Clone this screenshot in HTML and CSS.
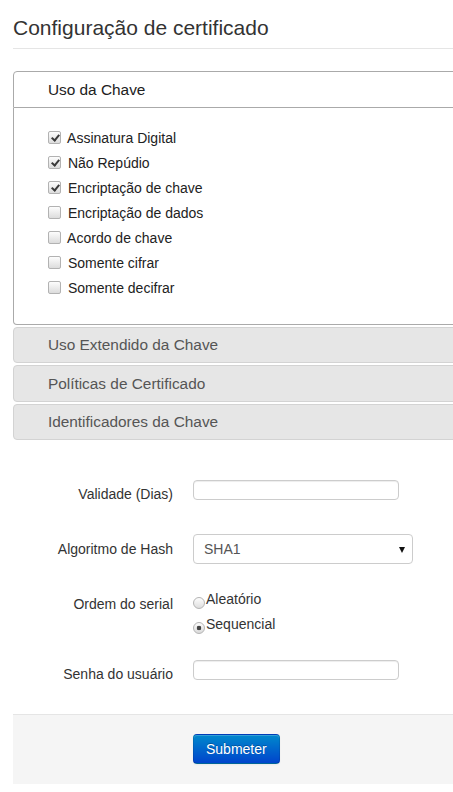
FILE: index.html
```html
<!DOCTYPE html>
<html lang="pt">
<head>
<meta charset="utf-8">
<title>Configuração de certificado</title>
<link rel="stylesheet" href="styles.css">
</head>
<body>
<div class="page">
  <h1 class="title">Configuração de certificado</h1>

  <div class="accordion">
    <div class="acc-header active">Uso da Chave</div>
    <div class="acc-content">
      <label class="check"><input type="checkbox" checked> Assinatura Digital</label>
      <label class="check"><input type="checkbox" checked> Não Repúdio</label>
      <label class="check"><input type="checkbox" checked> Encriptação de chave</label>
      <label class="check"><input type="checkbox"> Encriptação de dados</label>
      <label class="check"><input type="checkbox"> Acordo de chave</label>
      <label class="check"><input type="checkbox"> Somente cifrar</label>
      <label class="check"><input type="checkbox"> Somente decifrar</label>
    </div>
    <div class="acc-header">Uso Extendido da Chave</div>
    <div class="acc-header">Políticas de Certificado</div>
    <div class="acc-header">Identificadores da Chave</div>
  </div>

  <form class="form">
    <div class="group">
      <label class="control-label">Validade (Dias)</label>
      <div class="controls"><input type="text" class="text-input"></div>
    </div>
    <div class="group">
      <label class="control-label">Algoritmo de Hash</label>
      <div class="controls">
        <div class="select-wrap">
          <select class="select"><option>SHA1</option></select>
        </div>
      </div>
    </div>
    <div class="group">
      <label class="control-label">Ordem do serial</label>
      <div class="controls">
        <label class="radio"><input type="radio" name="serial">Aleatório</label>
        <label class="radio"><input type="radio" name="serial" checked>Sequencial</label>
      </div>
    </div>
    <div class="group">
      <label class="control-label">Senha do usuário</label>
      <div class="controls"><input type="password" class="text-input"></div>
    </div>
    <div class="actions">
      <button type="button" class="btn">Submeter</button>
    </div>
  </form>
</div>
</body>
</html>
```

FILE: styles.css
```css
html, body {
  margin: 0;
  padding: 0;
  overflow: hidden;
  background: #fff;
}

body {
  font-family: "Liberation Sans", Arial, sans-serif;
  font-size: 14px;
  line-height: 20px;
  color: #333;
}

.page {
  width: 940px;
  padding: 8px 0 0 13px;
}

.title {
  margin: 0 0 20px;
  font-size: 21px;
  font-weight: normal;
  line-height: 40px;
  color: #333;
  border-bottom: 1px solid #e5e5e5;
}

/* accordion */
.accordion {
  display: flow-root;
}

.acc-header {
  margin-top: 2px;
  padding: 7.7px 7.7px 7.7px 33.9px;
  font-size: 15.4px;
  line-height: 19.2px;
  color: #555;
  background: #e6e6e6;
  border: 1px solid #d3d3d3;
  border-radius: 4px;
}

.acc-header.active {
  color: #212121;
  background: #fff;
  border-color: #aaa;
  border-radius: 4px 4px 0 0;
}

.acc-content {
  padding: 20px 30px 21px 34px;
  border: 1px solid #aaa;
  border-top: 0;
  border-radius: 0 0 4px 4px;
  color: #222;
}

.check {
  display: flex;
  align-items: center;
  height: 20px;
  margin-bottom: 5px;
  white-space: pre;
}

.check input {
  appearance: none;
  -webkit-appearance: none;
  position: relative;
  flex: none;
  width: 13px;
  height: 13px;
  margin: 0 3px 0 0;
  border: 1px solid #b2b2b2;
  border-radius: 2px;
  background: linear-gradient(#fdfdfd, #dcdcdc);
  box-sizing: border-box;
}

.check input:checked::after {
  content: "";
  position: absolute;
  left: 3.5px;
  top: 1px;
  width: 3px;
  height: 6px;
  border-right: 2px solid #3a3a3a;
  border-bottom: 2px solid #3a3a3a;
  transform: rotate(40deg);
}

/* form */
.form {
  margin-top: 39px;
}

.group {
  display: flex;
  min-height: 35px;
  margin-bottom: 20px;
}

.control-label {
  width: 160px;
  padding-top: 5px;
  text-align: right;
  color: #333;
}

.controls {
  margin-left: 20px;
}

.text-input {
  display: block;
  box-sizing: border-box;
  width: 206px;
  height: 20px;
  margin: 1px 0 0;
  padding: 0 4px;
  border: 1px solid #ccc;
  border-radius: 4px;
  box-shadow: inset 0 1px 1px rgba(0, 0, 0, 0.075);
  font: inherit;
}

.select-wrap {
  position: relative;
  width: 220px;
}

.select-wrap::after {
  content: "";
  position: absolute;
  right: 8px;
  top: 13px;
  border-left: 3.5px solid transparent;
  border-right: 3.5px solid transparent;
  border-top: 6px solid #111;
}

.select {
  appearance: none;
  -webkit-appearance: none;
  display: block;
  box-sizing: border-box;
  width: 220px;
  height: 30px;
  padding: 0 10px;
  border: 1px solid #ccc;
  border-radius: 4px;
  background: #fff;
  font: inherit;
  color: #555;
}

.radio {
  display: flex;
  align-items: flex-start;
  height: 20px;
  margin-bottom: 5px;
  color: #333;
}

.radio input {
  appearance: none;
  -webkit-appearance: none;
  box-sizing: border-box;
  flex: none;
  width: 12px;
  height: 12px;
  margin: 8px 1px 0 0;
  border: 1px solid #b4b4b4;
  border-radius: 50%;
  background: linear-gradient(#fdfdfd, #dedede);
}

.radio input:checked {
  background: radial-gradient(circle, #444 0 2px, rgba(68, 68, 68, 0) 2.6px), linear-gradient(#fcfcfc, #dadada);
}

.actions {
  padding: 19px 20px 20px 180px;
  background: #f5f5f5;
  border-top: 1px solid #e5e5e5;
}

.btn {
  display: inline-block;
  padding: 4px 12px;
  font: inherit;
  font-size: 14px;
  line-height: 20px;
  color: #fff;
  text-shadow: 0 -1px 0 rgba(0, 0, 0, 0.25);
  background: linear-gradient(#0088cc, #0044cc);
  border: 1px solid;
  border-color: rgba(0, 0, 0, 0.1) rgba(0, 0, 0, 0.1) rgba(0, 0, 0, 0.25);
  border-radius: 4px;
  box-shadow: inset 0 1px 0 rgba(255, 255, 255, 0.2), 0 1px 2px rgba(0, 0, 0, 0.05);
}
```
